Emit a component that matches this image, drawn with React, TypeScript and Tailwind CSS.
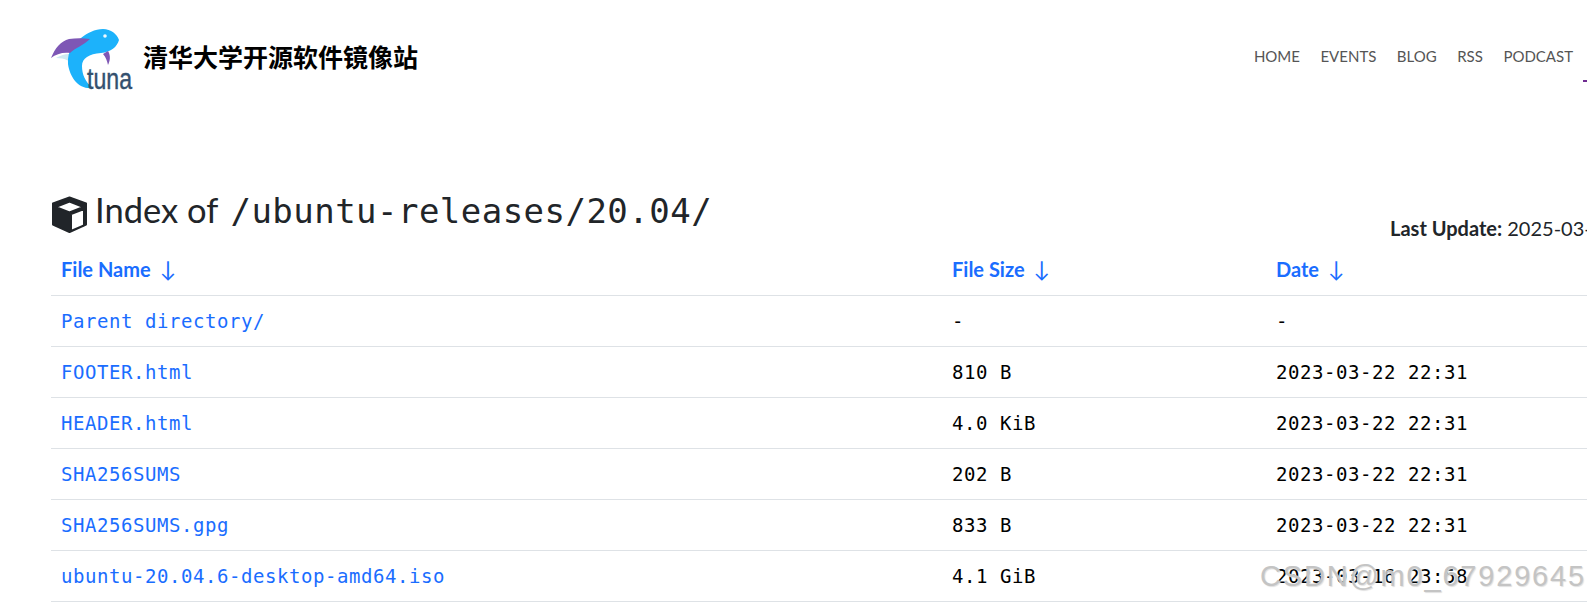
const files = [
  { name: "Parent directory/", size: "-", date: "-" },
  { name: "FOOTER.html", size: "810 B", date: "2023-03-22 22:31" },
  { name: "HEADER.html", size: "4.0 KiB", date: "2023-03-22 22:31" },
  { name: "SHA256SUMS", size: "202 B", date: "2023-03-22 22:31" },
  { name: "SHA256SUMS.gpg", size: "833 B", date: "2023-03-22 22:31" },
  { name: "ubuntu-20.04.6-desktop-amd64.iso", size: "4.1 GiB", date: "2023-03-16 23:58" },
];

const navItems = ["HOME", "EVENTS", "BLOG", "RSS", "PODCAST"];
const columns = ["File Name", "File Size", "Date"];

const colWidths = "grid grid-cols-[891px_324px_321px]";

function TunaLogo() {
  return (
    <svg viewBox="0 0 82 64" className="h-[64px] w-[82px] shrink-0">
      <path d="M5 30 C12 26 18 25 24 27 L26 40 C20 33 14 30 5 30 Z" fill="#cfe9f2" />
      <path d="M52 1 C60 1 66 6 68 12 C66 19 60 24 50 25 C38 26 31 30 31 38 C31 46 34 54 42 60 C28 62 19 50 17 36 C16 22 24 14 30 10 C36 5 44 1 52 1 Z" fill="#1cb2fb" />
      <path d="M0 30 C4 20 10 13 18 11 C25 10 32 10 39 11 C33 17 24 20 19 25 C12 24 5 26 0 30 Z" fill="#7e57b5" />
      <path d="M52 26 L57 23 C60 28 59 33 57 37 C56 33 55 29 52 26 Z" fill="#7e57b5" />
      <circle cx="54" cy="8" r="1.8" fill="#eef9ff" />
      <text x="36" y="61" fontFamily="'Liberation Sans',sans-serif" fontSize="30" textLength="45" lengthAdjust="spacingAndGlyphs" fill="#34506e" stroke="#34506e" strokeWidth="0.4">
        tuna
      </text>
    </svg>
  );
}

function CubeIcon() {
  return (
    <svg viewBox="-1 -1 37 38" className="mt-[6px] h-[38px] w-[37px] shrink-0 text-[#212529]">
      <path
        fill="currentColor"
        stroke="currentColor"
        strokeWidth="2"
        strokeLinejoin="round"
        fillRule="evenodd"
        d="M17.5 0.5 L34 6.5 V27.5 L17.5 35 L1 27.5 V6.5 Z M3.5 10 L17.5 4.5 L31.5 10 L17.5 15.5 Z M19 17 L32 12 V28.5 L19 34 Z"
      />
    </svg>
  );
}

export default function App() {
  return (
    <div className="relative h-[603px] w-[1587px] overflow-hidden bg-white font-['Lato',sans-serif] text-[#212529]">
      <header className="flex h-[190px] pl-[51px] pt-[28px]">
        <TunaLogo />
        <h1 className="ml-[10px] mt-[10px] h-[36px] font-['Noto_Sans_CJK_SC',sans-serif] text-[25px] leading-[36px] font-bold text-black">
          清华大学开源软件镜像站
        </h1>
        <nav className="ml-auto mr-[14px] mt-[18px] flex h-[20px] gap-[20.5px] text-[15px] leading-[20px] text-[#555]">
          {navItems.map((item) => (
            <span key={item}>{item}</span>
          ))}
        </nav>
      </header>

      <main className="w-[1587px] pl-[51px]">
        <div className="flex h-[56px] items-start whitespace-nowrap">
          <CubeIcon />
          <h2 className="ml-[7px] mt-[-2px] text-[34.5px] leading-[44px]">
            Index of <span className="ml-[4px] font-['DejaVu_Sans_Mono',monospace] text-[34px] tracking-[0.47px]">/ubuntu-releases/20.04/</span>
          </h2>
          <p className="ml-[678px] mt-[25px] text-[20px] leading-[26px]">
            <b>Last Update:</b> 2025-03-16 12:00
          </p>
        </div>

        <div className="w-[1536px]">
          <div className={`${colWidths} h-[50px] border-b border-[#dee2e6] text-[20px] leading-[46px] font-bold text-[#1a6dff]`}>
            {columns.map((col) => (
              <div key={col} className="pl-[10px]">
                {col}
                <span className="ml-[9px] text-[22px] font-normal">↓</span>
              </div>
            ))}
          </div>
          {files.map((file) => (
            <div key={file.name} className={`${colWidths} h-[51px] border-b border-[#dee2e6] font-['DejaVu_Sans_Mono',monospace] text-[19px] leading-[51px] tracking-[0.56px] text-black`}>
              <div className="pl-[10px] text-[#1a6dff]">{file.name}</div>
              <div className="pl-[10px]">{file.size}</div>
              <div className="pl-[10px]">{file.date}</div>
            </div>
          ))}
        </div>
      </main>

      {/* purple dash poking out from the nav */}
      <div className="absolute left-[1583px] top-[80px] h-[2px] w-[4px] bg-[#6f2c91]" />
      {/* CSDN watermark */}
      <div className="pointer-events-none absolute left-[1260px] top-[558px] font-['Liberation_Sans',sans-serif] text-[29px] leading-[36px] tracking-[1.8px] whitespace-nowrap text-[#c4c4c4] [text-shadow:1px_1px_1px_#e0e0e0]">
        CSDN@m0_67929645
      </div>
    </div>
  );
}
